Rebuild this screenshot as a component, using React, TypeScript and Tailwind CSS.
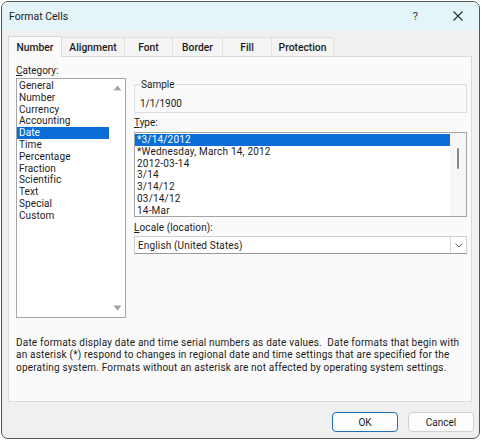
import React from 'react';

const categories = [
  'General',
  'Number',
  'Currency',
  'Accounting',
  'Date',
  'Time',
  'Percentage',
  'Fraction',
  'Scientific',
  'Text',
  'Special',
  'Custom',
];

const types = ['*3/14/2012', '*Wednesday, March 14, 2012', '2012-03-14', '3/14', '3/14/12', '03/14/12', '14-Mar'];

const tabs = ['Number', 'Alignment', 'Font', 'Border', 'Fill', 'Protection'];
const tabWidths = ['w-[54px]', 'w-[63px]', 'w-[48px]', 'w-[50px]', 'w-[49px]', 'w-[62px]'];

const Arrow = ({ down }: { down?: boolean }) => (
  <svg width="9" height="6" viewBox="0 0 9 6">
    <path d={down ? 'M0.5 0.5 L8.5 0.5 L4.5 5.5 Z' : 'M0.5 5.5 L8.5 5.5 L4.5 0.5 Z'} fill="#a3a3a3" />
  </svg>
);

const App = () => {
  return (
    <div className="w-[482px] h-[441px] bg-white pt-[1px] pl-[1px] font-['Roboto',sans-serif] text-[10px] text-[#1b1b1b]">
      <div className="w-[479px] h-[438px] border border-[#555555] rounded-[7px] overflow-hidden bg-[#f0f0f0] flex flex-col">
        {/* title bar */}
        <div className="h-[28px] shrink-0 bg-[#e4f5f9] flex items-center pl-[7px]">
          <span className="text-[10.5px] leading-[13px]">Format Cells</span>
          <span className="ml-auto mr-[35px] text-[11px] leading-[13px] text-[#333]">?</span>
          <svg className="mr-[16px]" width="10" height="10" viewBox="0 0 10 10">
            <path d="M0.5 0.5 L9.5 9.5 M9.5 0.5 L0.5 9.5" stroke="#2b2b2b" strokeWidth="1.1" />
          </svg>
        </div>

        {/* tabs */}
        <div className="mt-[6px] ml-[6px] h-[20px] flex items-end">
          {tabs.map((t, i) =>
            i === 0 ? (
              <div
                key={t}
                className={`${tabWidths[i]} h-[21px] -mb-px relative z-10 bg-[#fafafa] border border-b-0 border-[#d9d9d9] flex items-center justify-center font-medium text-[10.3px] leading-[13px]`}
              >
                {t}
              </div>
            ) : (
              <div
                key={t}
                className={`${tabWidths[i]} h-[19px] bg-[#f4f4f4] border border-b-0 border-l-0 border-[#e2e2e2] flex items-center justify-center font-medium text-[10.3px] leading-[13px]`}
              >
                {t}
              </div>
            ),
          )}
        </div>

        {/* panel */}
        <div className="ml-[6px] w-[464px] h-[346px] border border-[#dadada] bg-[#fafafa] pt-[7px] pl-[7px]">
          <div className="flex gap-[8px]">
            {/* category */}
            <div className="w-[110px]">
              <div className="h-[13px] leading-[13px]">
                <span className="underline underline-offset-1">C</span>ategory:
              </div>
              <div className="mt-[1px] h-[240px] border border-[#a5a5a5] bg-white flex">
                <div className="flex-1 pt-[1px] tracking-[0.1px]">
                  {categories.map((c) => (
                    <div
                      key={c}
                      className={`h-[11.8px] leading-[11.8px] pl-[2px] ${c === 'Date' ? 'bg-[#0a6ed6] text-white' : ''}`}
                    >
                      {c}
                    </div>
                  ))}
                </div>
                <div className="w-[16px] flex flex-col items-center justify-between pt-[6px] pb-[6px]">
                  <Arrow />
                  <Arrow down />
                </div>
              </div>
            </div>

            {/* right column */}
            <div className="w-[333px]">
              <fieldset className="mt-[13.5px] h-[35px] border border-[#dcdcdc] px-[5px]">
                <legend className="px-[1px] leading-[13px]">Sample</legend>
                <div className="mt-[6px] leading-[13px]">1/1/1900</div>
              </fieldset>

              <div className="mt-[3px] h-[13px] leading-[13px]">
                <span className="underline underline-offset-1">T</span>ype:
              </div>
              <div className="mt-[3.5px] h-[85px] border border-[#a5a5a5] bg-white flex">
                <div className="flex-1 pt-[1px] tracking-[0.2px]">
                  {types.map((t, i) => (
                    <div
                      key={t}
                      className={`h-[11.8px] leading-[11.8px] pl-[2px] ${i === 0 ? 'bg-[#0a6ed6] text-white' : ''}`}
                    >
                      {t}
                    </div>
                  ))}
                </div>
                <div className="w-[16px] bg-[#f6f6f6] flex justify-center pt-[15px]">
                  <div className="w-[2px] h-[21px] rounded-full bg-[#8a8a8a]" />
                </div>
              </div>

              <div className="mt-[4px] h-[13px] leading-[13px] tracking-[0.1px]">
                <span className="underline underline-offset-1">L</span>ocale (location):
              </div>
              <div className="mt-[2px] h-[18px] border border-[#cfcfcf] border-b-[#9a9a9a] bg-white flex items-center">
                <span className="flex-1 pl-[3px] leading-[13px] tracking-[0.15px]">English (United States)</span>
                <div className="w-[16px] h-full border-l border-[#dcdcdc] flex items-center justify-center">
                  <svg width="8" height="5" viewBox="0 0 8 5">
                    <path d="M0.5 0.5 L4 4 L7.5 0.5" fill="none" stroke="#666" strokeWidth="1" />
                  </svg>
                </div>
              </div>
            </div>
          </div>

          <p className="mt-[19px] leading-[12.4px] tracking-[0.2px]">
            Date formats display date and time serial numbers as date values.{'\u00a0'} Date formats that begin with
            <br />
            an asterisk (*) respond to changes in regional date and time settings that are specified for the
            <br />
            operating system. Formats without an asterisk are not affected by operating system settings.
          </p>
        </div>

        {/* buttons */}
        <div className="mt-[10px] flex justify-end gap-[10px] pr-[5px]">
          <button className="w-[66px] h-[20px] rounded-[4px] border border-[#1f6fb8] bg-[#fdfdfd] leading-[13px]">
            OK
          </button>
          <button className="w-[66px] h-[20px] rounded-[4px] border border-[#d0d0d0] bg-[#fdfdfd] leading-[13px]">
            Cancel
          </button>
        </div>
      </div>
    </div>
  );
};

export default App;
